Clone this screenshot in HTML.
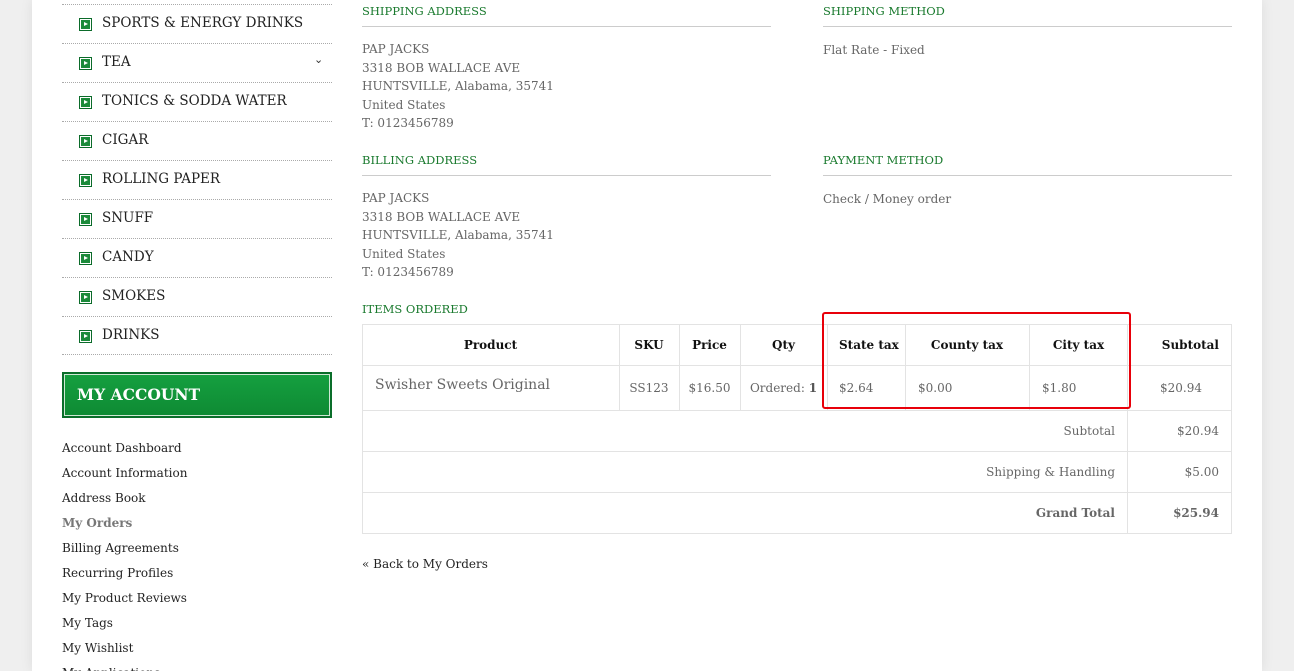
<!DOCTYPE html>
<html style="height:671px;overflow:hidden"><head><meta charset="utf-8"><style>
*{margin:0;padding:0;box-sizing:border-box}
body{width:1294px;height:671px;overflow:hidden;background:#efefef;font-family:"DejaVu Serif","Liberation Serif",serif;position:relative}
.page{position:absolute;left:32px;top:0;width:1230px;height:671px;background:#fff;box-shadow:0 0 12px rgba(0,0,0,.08)}
.a{position:absolute;white-space:nowrap}
.nav{left:62px;width:270px;height:39px;border-top:1px dotted #aaa}
.nav span.t{position:absolute;left:40px;top:10px;font-size:13.5px;color:#222}
.nav i{position:absolute;left:17px;top:13px;width:13px;height:13px;background:#1b8a3a;border:1px solid #0b6b2a;box-shadow:inset 0 0 0 1px #fff}
.nav i:after{content:"";position:absolute;left:4px;top:3px;border-left:4px solid #fff;border-top:2.5px solid transparent;border-bottom:2.5px solid transparent}
.h{font-size:11.5px;color:#1a7a2e}
.hl{height:1px;background:#ccc}
.tx{font-size:12px;color:#666;line-height:18.5px}
.ln{font-size:12px;color:#222}
.vl{position:absolute;width:1px;background:#e3e3e3}
.hz{position:absolute;height:1px;background:#e3e3e3}
.th{font-size:12px;font-weight:bold;color:#111}
.td{font-size:12px;color:#666}
</style></head><body>
<div class="page"></div>
<div class="a nav" style="top:4px"><i></i><span class="t">SPORTS &amp; ENERGY DRINKS</span></div>
<div class="a nav" style="top:43px"><i></i><span class="t">TEA</span><span style="position:absolute;left:252px;top:9px;font-size:11px;color:#333">&#8964;</span></div>
<div class="a nav" style="top:82px"><i></i><span class="t">TONICS &amp; SODDA WATER</span></div>
<div class="a nav" style="top:121px"><i></i><span class="t">CIGAR</span></div>
<div class="a nav" style="top:160px"><i></i><span class="t">ROLLING PAPER</span></div>
<div class="a nav" style="top:199px"><i></i><span class="t">SNUFF</span></div>
<div class="a nav" style="top:238px"><i></i><span class="t">CANDY</span></div>
<div class="a nav" style="top:277px"><i></i><span class="t">SMOKES</span></div>
<div class="a nav" style="top:316px;border-bottom:1px dotted #aaa"><i></i><span class="t">DRINKS</span></div>
<div class="a" style="left:62px;top:372px;width:270px;height:46px;background:linear-gradient(#15a040,#0e8a33);border:2px solid #0a6e2a;box-shadow:inset 0 0 0 1px #cfe8d5"><span style="position:absolute;left:13px;top:11px;color:#fff;font-weight:bold;font-size:15.5px">MY ACCOUNT</span></div>
<div class="a ln" style="left:62px;top:436px;line-height:25px">Account Dashboard<br>Account Information<br>Address Book<br><span style="color:#777;font-weight:bold">My Orders</span><br>Billing Agreements<br>Recurring Profiles<br>My Product Reviews<br>My Tags<br>My Wishlist<br>My Applications</div>

<div class="a h" style="left:362px;top:4px">SHIPPING ADDRESS</div><div class="a hl" style="left:362px;top:26px;width:409px"></div>
<div class="a h" style="left:823px;top:4px">SHIPPING METHOD</div><div class="a hl" style="left:823px;top:26px;width:409px"></div>
<div class="a tx" style="left:362px;top:40px">PAP JACKS<br>3318 BOB WALLACE AVE<br>HUNTSVILLE, Alabama, 35741<br>United States<br>T: 0123456789</div>
<div class="a tx" style="left:823px;top:41px">Flat Rate - Fixed</div>
<div class="a h" style="left:362px;top:153px">BILLING ADDRESS</div><div class="a hl" style="left:362px;top:175px;width:409px"></div>
<div class="a h" style="left:823px;top:153px">PAYMENT METHOD</div><div class="a hl" style="left:823px;top:175px;width:409px"></div>
<div class="a tx" style="left:362px;top:189px">PAP JACKS<br>3318 BOB WALLACE AVE<br>HUNTSVILLE, Alabama, 35741<br>United States<br>T: 0123456789</div>
<div class="a tx" style="left:823px;top:190px">Check / Money order</div>
<div class="a h" style="left:362px;top:302px">ITEMS ORDERED</div>

<div class="hz" style="left:362px;top:324px;width:870px"></div>
<div class="hz" style="left:362px;top:365px;width:870px"></div>
<div class="hz" style="left:362px;top:410px;width:870px"></div>
<div class="hz" style="left:362px;top:451px;width:870px"></div>
<div class="hz" style="left:362px;top:492px;width:870px"></div>
<div class="hz" style="left:362px;top:533px;width:870px"></div>
<div class="vl" style="left:362px;top:324px;height:210px"></div>
<div class="vl" style="left:1231px;top:324px;height:210px"></div>
<div class="vl" style="left:619px;top:324px;height:87px"></div>
<div class="vl" style="left:679px;top:324px;height:87px"></div>
<div class="vl" style="left:740px;top:324px;height:87px"></div>
<div class="vl" style="left:827px;top:324px;height:87px"></div>
<div class="vl" style="left:905px;top:324px;height:87px"></div>
<div class="vl" style="left:1029px;top:324px;height:87px"></div>
<div class="vl" style="left:1127px;top:324px;height:210px"></div>

<div class="a th" style="left:362px;width:257px;top:338px;text-align:center">Product</div>
<div class="a th" style="left:619px;width:60px;top:338px;text-align:center">SKU</div>
<div class="a th" style="left:679px;width:61px;top:338px;text-align:center">Price</div>
<div class="a th" style="left:740px;width:87px;top:338px;text-align:center">Qty</div>
<div class="a th" style="left:839px;top:338px">State tax</div>
<div class="a th" style="left:905px;width:124px;top:338px;text-align:center">County tax</div>
<div class="a th" style="left:1029px;width:99px;top:338px;text-align:center">City tax</div>
<div class="a th" style="right:75px;top:338px">Subtotal</div>
<div class="a td" style="left:375px;top:377px;font-size:14px">Swisher Sweets Original</div>
<div class="a td" style="left:619px;width:60px;top:381px;text-align:center">SS123</div>
<div class="a td" style="left:679px;width:61px;top:381px;text-align:center">$16.50</div>
<div class="a td" style="left:740px;width:87px;top:381px;text-align:center">Ordered: <b style="color:#555">1</b></div>
<div class="a td" style="left:839px;top:381px">$2.64</div>
<div class="a td" style="left:918px;top:381px">$0.00</div>
<div class="a td" style="left:1042px;top:381px">$1.80</div>
<div class="a td" style="left:1160px;top:381px">$20.94</div>
<div class="a td" style="right:179px;top:424px">Subtotal</div>
<div class="a td" style="right:75px;top:424px">$20.94</div>
<div class="a td" style="right:179px;top:465px">Shipping &amp; Handling</div>
<div class="a td" style="right:75px;top:465px">$5.00</div>
<div class="a td" style="right:179px;top:506px;font-weight:bold">Grand Total</div>
<div class="a td" style="right:75px;top:506px;font-weight:bold">$25.94</div>
<div class="a" style="left:822px;top:312px;width:309px;height:97px;border:2px solid #e8000a;border-radius:3px"></div>
<div class="a ln" style="left:362px;top:557px">« Back to My Orders</div>
</body></html>
